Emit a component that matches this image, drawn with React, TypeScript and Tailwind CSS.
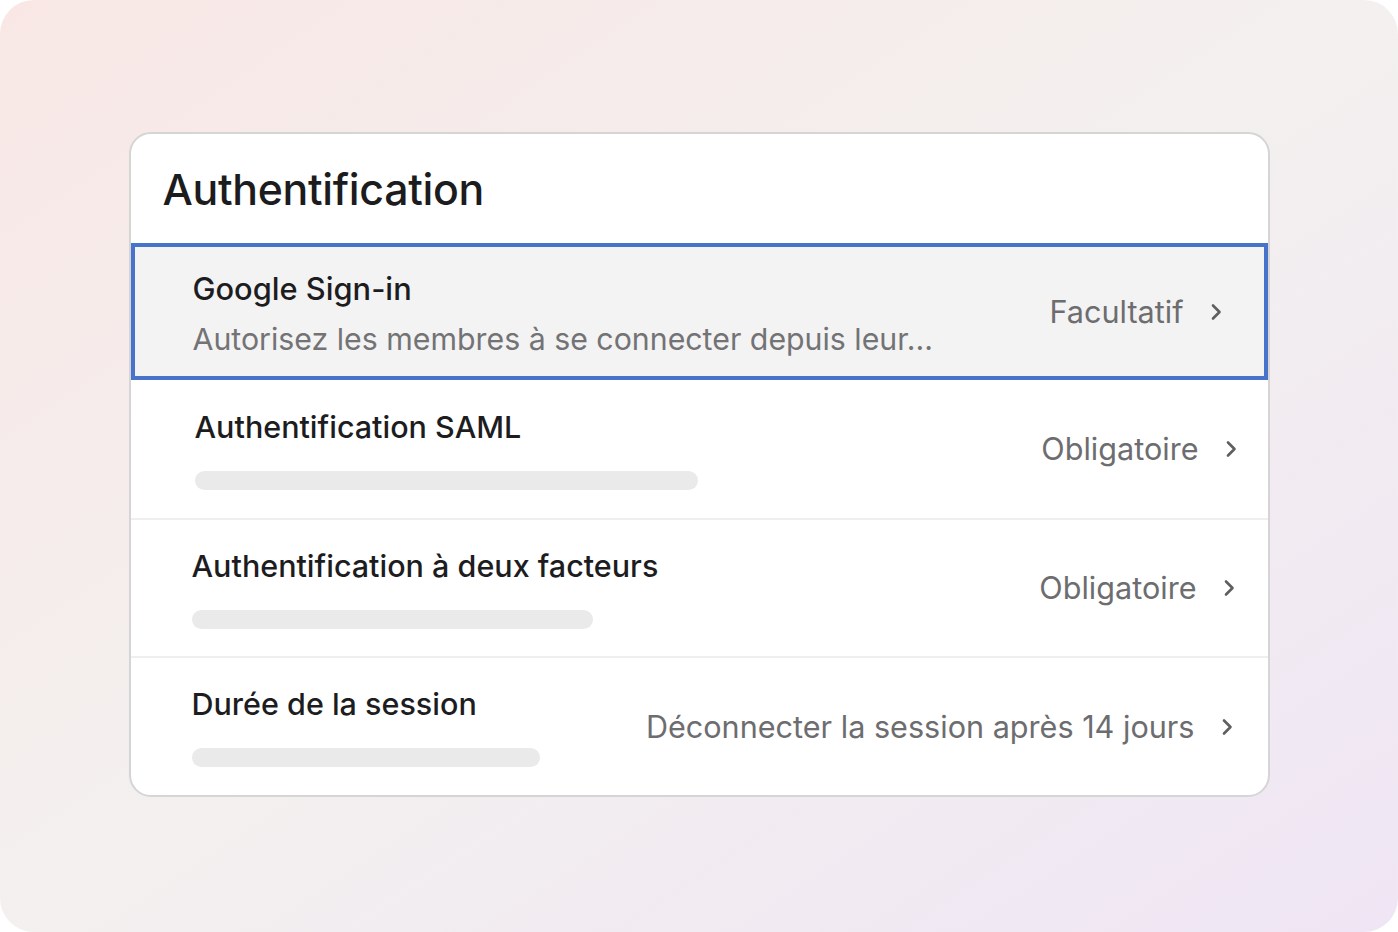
import { ReactNode } from "react";

const Chevron = () => (
  <svg width="12" height="18" viewBox="0 0 12 18" fill="none" className="shrink-0">
    <path d="M3 2.5L9.5 9L3 15.5" stroke="#5f5f62" strokeWidth="2.6" strokeLinecap="round" strokeLinejoin="round" />
  </svg>
);

interface RowProps {
  title: string;
  value: string;
  barWidth: string;
  padLeft: string;
  padRight: string;
  height: string;
  divider?: boolean;
}

const Row = ({ title, value, barWidth, padLeft, padRight, height, divider }: RowProps) => (
  <div
    className={`flex items-center justify-between ${height} ${padLeft} ${padRight} ${
      divider ? "border-b-2 border-[#efefef]" : ""
    }`}
  >
    <div className="flex flex-col">
      <span className="text-[30.5px] leading-[36px] font-[480] text-[#1d1d1f]">{title}</span>
      <div className={`mt-[26px] h-[19px] rounded-full bg-[#ebeaea] ${barWidth}`} />
    </div>
    <RightValue>{value}</RightValue>
  </div>
);

const RightValue = ({ children }: { children: ReactNode }) => (
  <div className="flex items-center gap-[26px]">
    <span className="text-[30.6px] leading-[36px] text-[#6d6d70]">{children}</span>
    <Chevron />
  </div>
);

export default function App() {
  return (
    <div className="w-[1398px] h-[932px] bg-white" style={{ fontFamily: "Inter, 'Noto Sans', sans-serif" }}>
      <div className="w-full h-full rounded-[34px] bg-gradient-to-br from-[#f8e7e5] via-[#f3f0ef] to-[#efe5f4] pt-[132px] flex justify-center">
        <div className="w-[1141px] self-start rounded-[22px] border-2 border-[#d5d5d5] bg-white overflow-hidden">
          <div className="h-[109px] flex items-center pl-[32px] pt-[2px]">
            <h1 className="text-[42.8px] leading-[54px] font-[460] tracking-[-0.3px] text-[#1c1c1e]">Authentification</h1>
          </div>

          <div className="h-[137px] border-4 border-[#4773cb] bg-[#f3f3f3] flex items-center justify-between pl-[58px] pr-[42px] pt-[5px]">
            <div className="flex flex-col">
              <span className="text-[30.8px] leading-[36px] font-[480] text-[#1d1d1f]">Google Sign-in</span>
              <span className="mt-[14px] text-[30.3px] leading-[36px] text-[#737376]">
                Autorisez les membres à se connecter depuis leur...
              </span>
            </div>
            <div className="-mt-[5px]">
              <RightValue>Facultatif</RightValue>
            </div>
          </div>

          <Row
            title="Authentification SAML"
            value="Obligatoire"
            barWidth="w-[503px]"
            padLeft="pl-[64px]"
            padRight="pr-[31px]"
            height="h-[140px]"
            divider
          />
          <Row
            title="Authentification à deux facteurs"
            value="Obligatoire"
            barWidth="w-[401px]"
            padLeft="pl-[61px]"
            padRight="pr-[33px]"
            height="h-[138px]"
            divider
          />
          <Row
            title="Durée de la session"
            value="Déconnecter la session après 14 jours"
            barWidth="w-[348px]"
            padLeft="pl-[61px]"
            padRight="pr-[35px]"
            height="h-[137px]"
          />
        </div>
      </div>
    </div>
  );
}
